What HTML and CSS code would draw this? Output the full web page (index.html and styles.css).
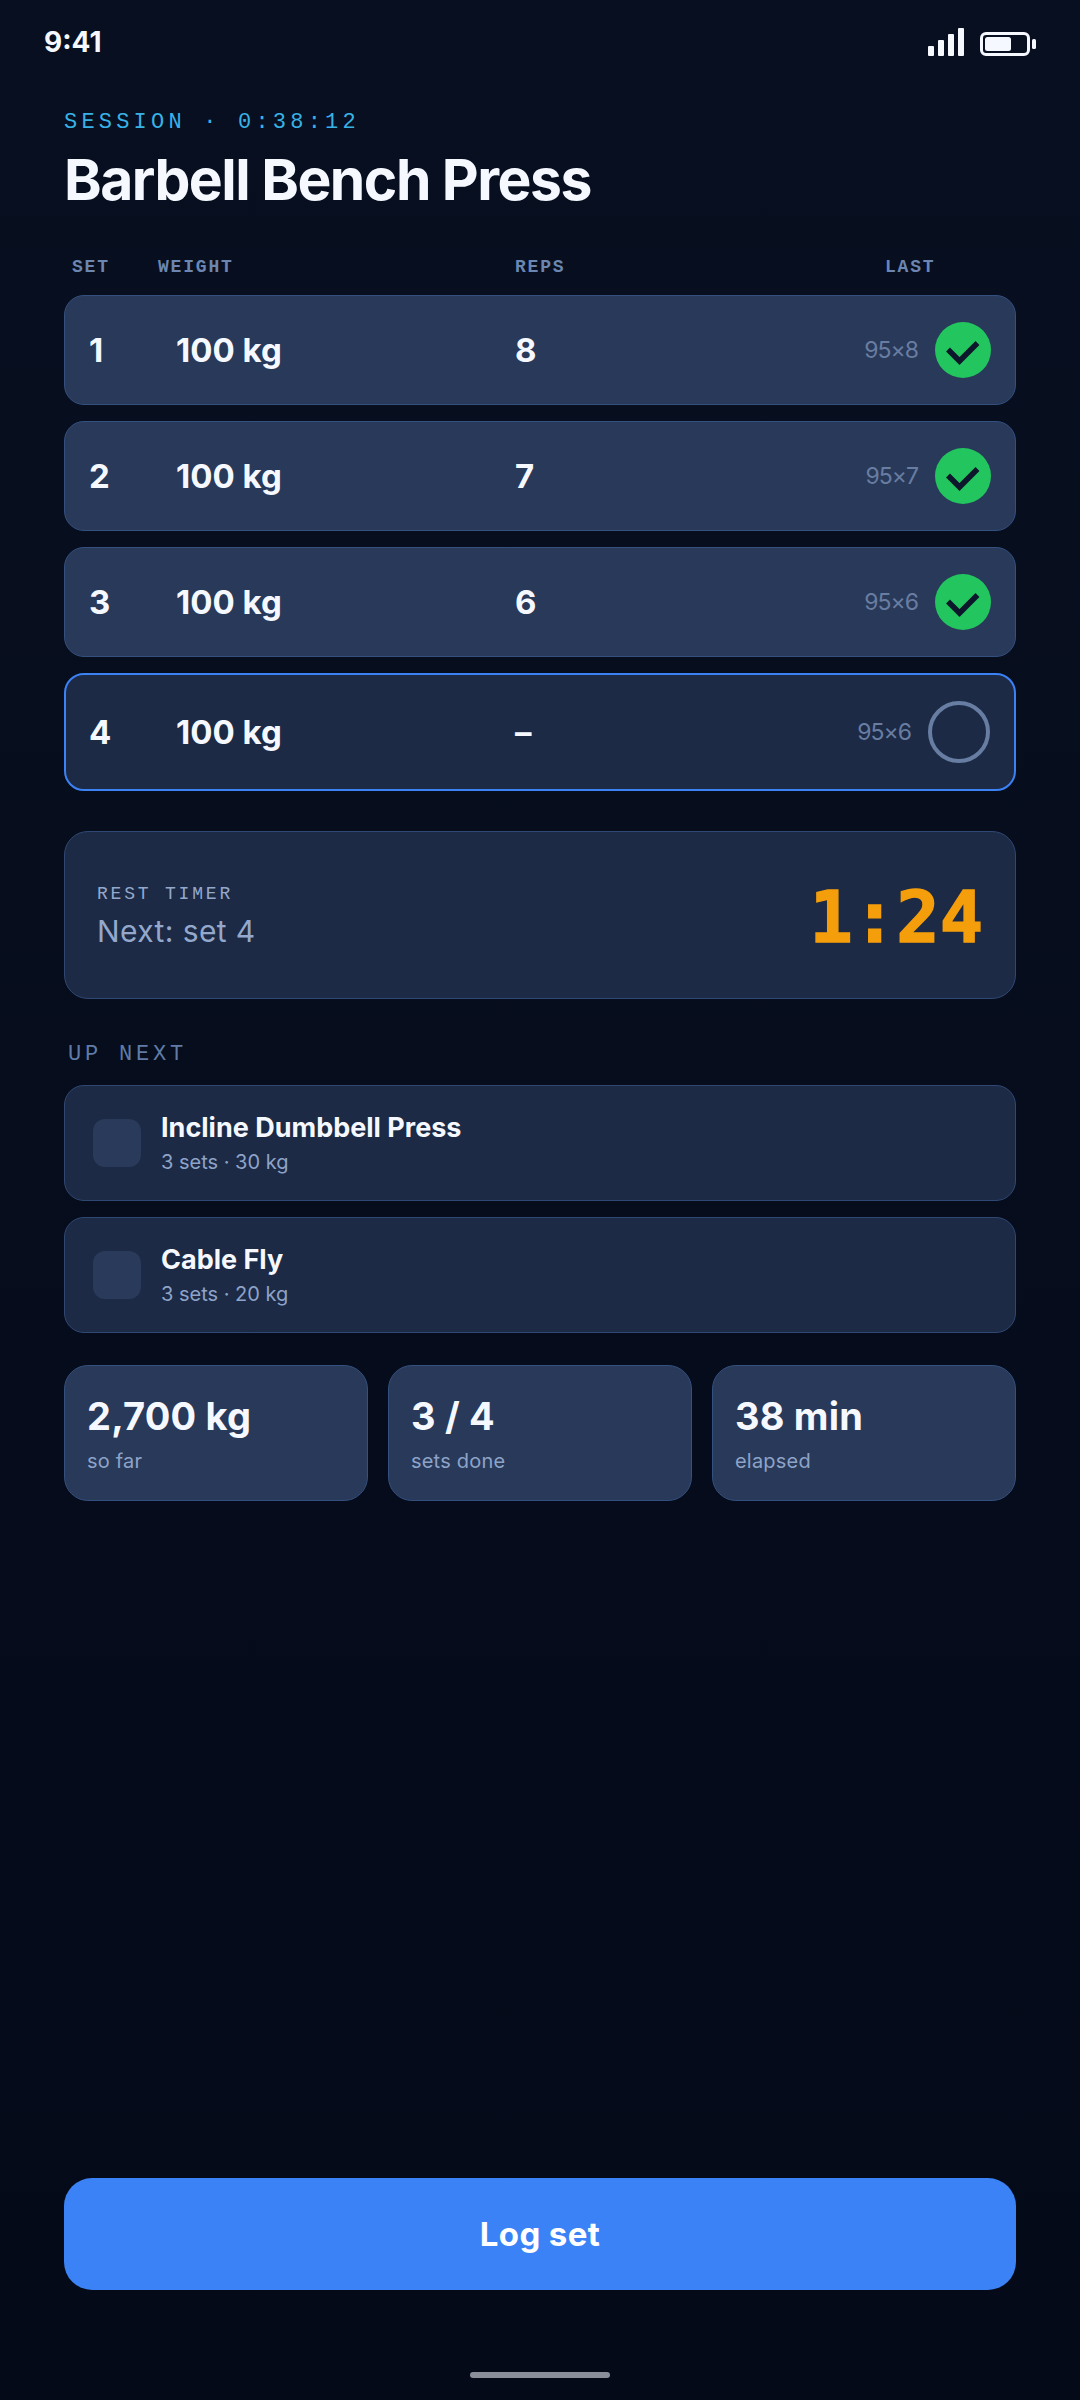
FILE: index.html
```html
<!DOCTYPE html>
<html lang="en">
<head>
<meta charset="utf-8">
<title>Barbell Bench Press</title>
<link rel="stylesheet" href="styles.css">
</head>
<body>
<div class="screen">
  <header class="status">
    <span class="time">9:41</span>
    <div class="status-icons">
      <svg class="signal" width="36" height="28" viewBox="0 0 36 28"><rect x="0" y="18" width="6" height="10" rx="1"/><rect x="10" y="12" width="6" height="16" rx="1"/><rect x="20" y="6" width="6" height="22" rx="1"/><rect x="30" y="0" width="6" height="28" rx="1"/></svg>
      <svg class="battery" width="56" height="24" viewBox="0 0 56 24"><rect x="1.5" y="1.5" width="47" height="21" rx="4.5" fill="none" stroke="#f5f8ff" stroke-width="3"/><rect x="5" y="5" width="26" height="14" rx="2.5"/><rect x="52" y="7" width="4" height="10" rx="1.5"/></svg>
    </div>
  </header>

  <main class="content">
    <p class="session">SESSION · 0:38:12</p>
    <h1 class="title">Barbell Bench Press</h1>

    <div class="cols">
      <span>SET</span><span>WEIGHT</span><span>REPS</span><span>LAST</span>
    </div>

    <div class="rows">
      <div class="row done">
        <span class="num">1</span><span class="num">100 kg</span><span class="num">8</span>
        <div class="end"><span class="last">95×8</span><span class="check"><svg width="56" height="56" viewBox="0 0 56 56"><path d="M13 27.5 24.5 39 42.5 21"/></svg></span></div>
      </div>
      <div class="row done">
        <span class="num">2</span><span class="num">100 kg</span><span class="num">7</span>
        <div class="end"><span class="last">95×7</span><span class="check"><svg width="56" height="56" viewBox="0 0 56 56"><path d="M13 27.5 24.5 39 42.5 21"/></svg></span></div>
      </div>
      <div class="row done">
        <span class="num">3</span><span class="num">100 kg</span><span class="num">6</span>
        <div class="end"><span class="last">95×6</span><span class="check"><svg width="56" height="56" viewBox="0 0 56 56"><path d="M13 27.5 24.5 39 42.5 21"/></svg></span></div>
      </div>
      <div class="row active">
        <span class="num">4</span><span class="num">100 kg</span><span class="num">–</span>
        <div class="end"><span class="last">95×6</span><span class="ring"></span></div>
      </div>
    </div>

    <section class="rest">
      <div>
        <p class="rest-label">REST TIMER</p>
        <p class="rest-next">Next: set 4</p>
      </div>
      <span class="clock">1:24</span>
    </section>

    <h2 class="up-label">UP NEXT</h2>
    <div class="next-list">
      <div class="next">
        <span class="thumb"></span>
        <div><p class="next-name">Incline Dumbbell Press</p><p class="next-sub">3 sets · 30 kg</p></div>
      </div>
      <div class="next">
        <span class="thumb"></span>
        <div><p class="next-name">Cable Fly</p><p class="next-sub">3 sets · 20 kg</p></div>
      </div>
    </div>

    <div class="stats">
      <div class="stat"><p class="stat-value">2,700 kg</p><p class="stat-label">so far</p></div>
      <div class="stat"><p class="stat-value">3 / 4</p><p class="stat-label">sets done</p></div>
      <div class="stat"><p class="stat-value">38 min</p><p class="stat-label">elapsed</p></div>
    </div>

    <button class="log" type="button">Log set</button>
  </main>

  <div class="home-bar"></div>
</div>
</body>
</html>
```
FILE: styles.css
```css
* { box-sizing: border-box; }
html, body { margin: 0; padding: 0; }
body { background: #040a17; font-family: Inter, "Noto Sans", sans-serif; color: #f5f8ff; }
p, h1, h2 { margin: 0; font-weight: inherit; font-size: inherit; }

.screen {
  width: 1080px;
  height: 2400px;
  display: flex;
  flex-direction: column;
  background: linear-gradient(180deg, #080f20 0%, #040a18 100%);
}

.status {
  height: 84px;
  flex: none;
  display: flex;
  justify-content: space-between;
  align-items: flex-start;
  padding: 25px 44px 0;
}
.time { font-size: 28px; line-height: 34px; font-weight: 700; letter-spacing: 0; }
.status-icons { display: flex; gap: 16px; padding-top: 3px; align-items: flex-end; }
.signal, .battery { fill: #f5f8ff; display: block; }

.content { flex: 1; display: flex; flex-direction: column; padding: 25px 64px 0; }

.session {
  font-family: "Liberation Mono", monospace;
  font-size: 22px;
  line-height: 28px;
  letter-spacing: 4.2px;
  color: #38b2e6;
}
.title {
  margin-top: 9px;
  font-size: 57px;
  line-height: 68px;
  font-weight: 700;
  letter-spacing: -1.5px;
}

.cols {
  margin-top: 41px;
  padding-left: 8px;
  display: grid;
  grid-template-columns: 86px 357px 370px auto;
  font-family: "Liberation Mono", monospace;
  font-weight: 700;
  font-size: 18px;
  line-height: 24px;
  letter-spacing: 1.8px;
  color: #6b86b0;
}

.rows { margin-top: 16px; display: flex; flex-direction: column; gap: 16px; }
.row {
  height: 110px;
  display: grid;
  grid-template-columns: 87px 339px 1fr auto;
  align-items: center;
  padding: 0 24px;
  border-radius: 20px;
  border: 1px solid #33507f;
}
.row.done { background: #283959; }
.row.active { height: 118px; background: #1c2a45; border: 2px solid #3b82f6; padding: 0 24px 0 23px; }
.num { font-size: 33px; font-weight: 700; letter-spacing: 0; line-height: 40px; }
.end { display: flex; align-items: center; gap: 17px; }
.last { font-size: 23px; letter-spacing: -1px; color: #687da1; }
.check { width: 56px; height: 56px; border-radius: 50%; background: #22c55e; display: block; }
.check svg { display: block; fill: none; stroke: #0d172c; stroke-width: 5.5; }
.ring { width: 62px; height: 62px; border-radius: 50%; border: 4px solid #677da2; display: block; }

.rest {
  margin-top: 40px;
  height: 168px;
  display: flex;
  justify-content: space-between;
  align-items: center;
  padding: 3px 32px 0;
  background: #1c2a45;
  border: 1px solid #2f4873;
  border-radius: 24px;
}
.rest-label {
  font-family: "Liberation Mono", monospace;
  font-size: 18px;
  line-height: 22px;
  letter-spacing: 2.8px;
  color: #94a8cc;
}
.rest-next { margin-top: 7px; font-size: 30px; line-height: 38px; letter-spacing: 0.4px; color: #94a8cc; }
.clock {
  font-family: "DejaVu Sans Mono", monospace;
  font-size: 72px;
  font-weight: 700;
  line-height: 80px;
  color: #f59e0b;
  -webkit-text-stroke: 1.5px #f59e0b;
}

.up-label {
  margin-top: 41px;
  padding-left: 4px;
  font-family: "Liberation Mono", monospace;
  font-size: 22px;
  line-height: 30px;
  letter-spacing: 3.8px;
  color: #5f7ba6;
}

.next-list { margin-top: 15px; display: flex; flex-direction: column; gap: 16px; }
.next {
  height: 116px;
  display: flex;
  align-items: center;
  gap: 20px;
  padding: 0 28px;
  background: #1c2a45;
  border: 1px solid #2f4873;
  border-radius: 20px;
}
.thumb { width: 48px; height: 48px; border-radius: 12px; background: #293a5b; display: block; flex: none; }
.next-name { font-size: 27px; line-height: 34px; font-weight: 700; letter-spacing: 0; }
.next-sub { margin-top: 4px; font-size: 20px; line-height: 26px; color: #8ea3c8; }

.stats { margin-top: 32px; display: grid; grid-template-columns: repeat(3, 1fr); gap: 20px; }
.stat {
  height: 136px;
  padding: 27px 22px 0;
  background: #283959;
  border: 1px solid #33507f;
  border-radius: 24px;
}
.stat-value { font-size: 38px; line-height: 46px; font-weight: 700; letter-spacing: 0.2px; }
.stat-label { margin-top: 9px; font-size: 20px; line-height: 26px; letter-spacing: 0.2px; color: #8ea3c8; }

.log {
  margin-top: auto;
  margin-bottom: 0;
  height: 112px;
  flex: none;
  border: 0;
  border-radius: 28px;
  background: #3b82f6;
  color: #fff;
  font-family: Inter, "Noto Sans", sans-serif;
  font-size: 33px;
  font-weight: 700;
  letter-spacing: 0.4px;
}

.home-bar {
  flex: none;
  width: 140px;
  height: 6px;
  margin: 82px auto 22px;
  border-radius: 3px;
  background: #8a8e99;
}
```
